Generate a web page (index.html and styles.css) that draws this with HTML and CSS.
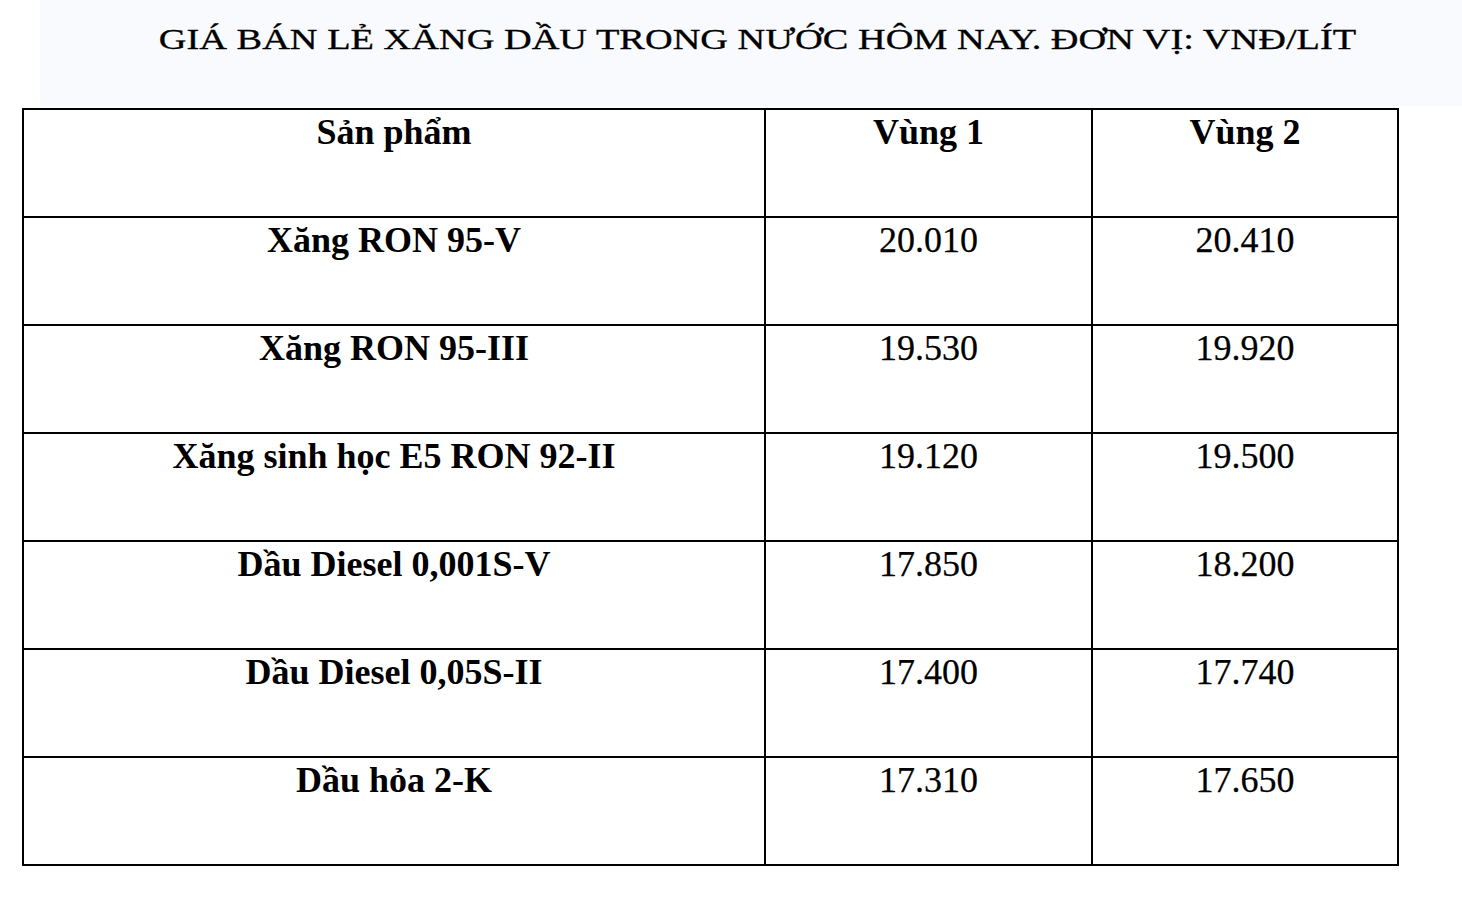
FILE: index.html
```html
<!DOCTYPE html>
<html>
<head>
<meta charset="utf-8">
<title>Giá bán lẻ xăng dầu</title>
<link rel="stylesheet" href="styles.css">
</head>
<body>
<div class="title-panel">
  <h1 class="title"><span class="title-text">GIÁ BÁN LẺ XĂNG DẦU TRONG NƯỚC HÔM NAY. ĐƠN VỊ: VNĐ/LÍT</span></h1>
</div>
<table class="prices">
  <colgroup>
    <col class="c-name">
    <col class="c-v1">
    <col class="c-v2">
  </colgroup>
  <tr class="head">
    <td>Sản phẩm</td>
    <td>Vùng 1</td>
    <td>Vùng 2</td>
  </tr>
  <tr>
    <td class="name">Xăng RON 95-V</td>
    <td>20.010</td>
    <td>20.410</td>
  </tr>
  <tr>
    <td class="name">Xăng RON 95-III</td>
    <td>19.530</td>
    <td>19.920</td>
  </tr>
  <tr>
    <td class="name">Xăng sinh học E5 RON 92-II</td>
    <td>19.120</td>
    <td>19.500</td>
  </tr>
  <tr>
    <td class="name">Dầu Diesel 0,001S-V</td>
    <td>17.850</td>
    <td>18.200</td>
  </tr>
  <tr>
    <td class="name">Dầu Diesel 0,05S-II</td>
    <td>17.400</td>
    <td>17.740</td>
  </tr>
  <tr>
    <td class="name">Dầu hỏa 2-K</td>
    <td>17.310</td>
    <td>17.650</td>
  </tr>
</table>
</body>
</html>
```

FILE: styles.css
```css
html, body {
  margin: 0;
  padding: 0;
  background: #ffffff;
}

body {
  font-family: "Liberation Serif", serif;
  color: #000000;
  width: 1462px;
  height: 906px;
  overflow: hidden;
}

.title-panel {
  margin-left: 40px;
  height: 106px;
  background: #f9fafd;
  box-sizing: border-box;
  padding-top: 22px;
  padding-left: 14px;
}

.title {
  margin: 0;
  font-family: "Liberation Serif", serif;
  font-size: 29.5px;
  font-weight: normal;
  line-height: 34px;
  text-align: center;
}

.title-text {
  display: inline-block;
  white-space: nowrap;
  transform: scaleX(1.30);
  transform-origin: center center;
  -webkit-text-stroke: 0.3px #000000;
}

.prices {
  margin-left: 22px;
  margin-top: 2px;
  border-collapse: collapse;
  table-layout: fixed;
  width: 1377px;
}

.c-name { width: 742px; }
.c-v1 { width: 327px; }
.c-v2 { width: 306px; }

.prices td {
  font-family: "Liberation Serif", serif;
  border: 2px solid #000000;
  box-sizing: border-box;
  height: 108px;
  padding: 2px 4px 0 4px;
  vertical-align: top;
  text-align: center;
  font-size: 36px;
  line-height: 40px;
  font-weight: normal;
  -webkit-text-stroke: 0.25px #000000;
}

.prices tr.head td,
.prices td.name {
  font-weight: bold;
  -webkit-text-stroke: 0;
}
```
